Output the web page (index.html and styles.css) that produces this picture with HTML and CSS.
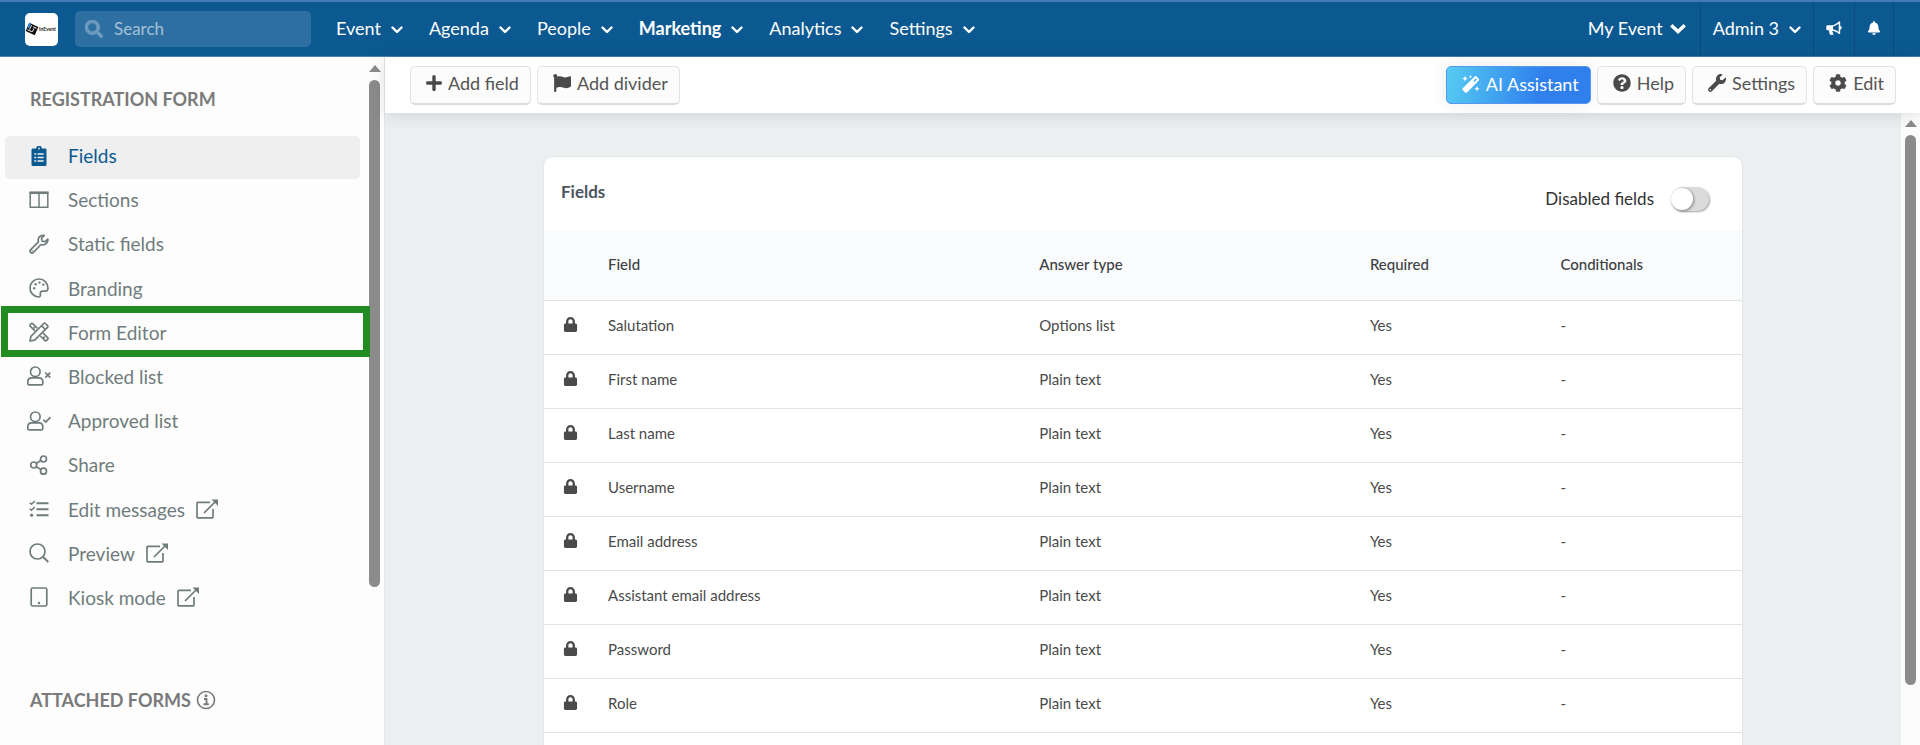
FILE: index.html
```html
<!DOCTYPE html>
<html lang="en">
<head>
<meta charset="utf-8">
<title>Registration form - Fields</title>
<link rel="stylesheet" href="styles.css">
</head>
<body>
<svg class="sprite" aria-hidden="true">
  <symbol id="i-chevron" viewBox="0 0 12 8"><path d="M1.500 1.500 6 6l4.500-4.500" fill="none" stroke="currentColor" stroke-width="2.400" stroke-linecap="round" stroke-linejoin="round"/></symbol>
  <symbol id="i-chevron-big" viewBox="0 0 16 11"><path d="M1.300 2.200 8 8.600l6.700-6.400" fill="none" stroke="currentColor" stroke-width="3.400" stroke-linecap="butt"/></symbol>
  <symbol id="i-search" viewBox="0 0 512 512"><path fill="currentColor" stroke="currentColor" stroke-width="24" d="M505 442.700L405.300 343c-4.500-4.500-10.600-7-17-7H372c27.600-35.300 44-79.700 44-128C416 93.100 322.900 0 208 0S0 93.100 0 208s93.100 208 208 208c48.300 0 92.700-16.400 128-44v16.300c0 6.400 2.500 12.500 7 17l99.700 99.700c9.400 9.400 24.600 9.400 33.900 0l28.300-28.300c9.400-9.400 9.400-24.600.1-34zM208 336c-70.700 0-128-57.200-128-128 0-70.700 57.200-128 128-128 70.700 0 128 57.200 128 128 0 70.700-57.200 128-128 128z"/></symbol>
  <symbol id="i-bell" viewBox="0 0 448 512"><path fill="currentColor" d="M224 512c35.320 0 63.970-28.650 63.970-64H160.030c0 35.350 28.650 64 63.970 64zm215.390-149.710c-19.320-20.760-55.470-51.990-55.470-154.290 0-77.700-54.480-139.900-127.940-155.160V32c0-17.670-14.320-32-31.980-32s-31.980 14.330-31.980 32v20.840C118.560 68.100 64.080 130.300 64.080 208c0 102.300-36.150 133.530-55.470 154.290-6 6.450-8.660 14.160-8.610 21.710.11 16.400 12.980 32 32.100 32h383.800c19.120 0 32-15.600 32.100-32 .05-7.550-2.610-15.270-8.610-21.710z"/></symbol>
  <symbol id="i-horn" viewBox="0 0 16 14"><path fill="currentColor" fill-rule="evenodd" d="M13 .4c.6-.2 1.200.1 1.200.8v3.900c1 .2 1.500.8 1.500 1.700s-.5 1.500-1.500 1.700v3.700c0 .7-.6 1-1.200.7-2-1.500-4-2.800-6.400-3.200-.5.700-.2 1.200.4 1.600-.5.700-.2 1.100.8 1.900-1 .9-3 .9-4 .3-.3-1.300-1-2.700-.5-4.200H1.700C.9 9.300.3 8.700.3 7.900V5.700c0-.8.600-1.400 1.400-1.400h3.800C8.400 4.200 10.900 2.200 13 .4zM12.700 2.600C11 3.900 9.200 5 7 5.400v2.900c2.200.4 4 1.400 5.700 2.700z"/></symbol>
  <symbol id="i-plus" viewBox="0 0 448 512"><path fill="currentColor" d="M416 208H272V64c0-17.670-14.330-32-32-32h-32c-17.670 0-32 14.330-32 32v144H32c-17.670 0-32 14.330-32 32v32c0 17.670 14.330 32 32 32h144v144c0 17.670 14.330 32 32 32h32c17.670 0 32-14.330 32-32V304h144c17.670 0 32-14.330 32-32v-32c0-17.670-14.330-32-32-32z"/></symbol>
  <symbol id="i-flag" viewBox="0 0 512 512"><path fill="currentColor" d="M349.565 98.783C295.978 98.783 251.721 64 184.348 64c-24.955 0-47.309 4.384-68.045 12.013a55.947 55.947 0 0 0 3.586-23.562C118.117 24.015 94.806 1.206 66.338.048 34.345-1.254 8 24.296 8 56c0 19.026 9.497 35.825 24 45.945V488c0 13.255 10.745 24 24 24h16c13.255 0 24-10.745 24-24v-94.400c28.311-12.064 63.582-22.122 114.435-22.122 53.588 0 97.844 34.783 165.217 34.783 48.169 0 86.667-16.294 122.505-40.858C506.840 359.452 512 349.571 512 339.045v-243.100c0-23.393-24.269-38.870-45.485-29.016-34.338 15.948-76.454 31.854-116.950 31.854z"/></symbol>
  <symbol id="i-help" viewBox="0 0 512 512"><path fill="currentColor" d="M504 256c0 136.997-111.043 248-248 248S8 392.997 8 256C8 119.083 119.043 8 256 8s248 111.083 248 248zM262.655 90c-54.497 0-89.255 22.957-116.549 63.758-3.536 5.286-2.353 12.415 2.715 16.258l34.699 26.310c5.205 3.947 12.621 3.008 16.665-2.122 17.864-22.658 30.113-35.797 57.303-35.797 20.429 0 45.698 13.148 45.698 32.958 0 14.976-12.363 22.667-32.534 33.976C247.128 238.528 216 254.941 216 296v4c0 6.627 5.373 12 12 12h56c6.627 0 12-5.373 12-12v-1.333c0-28.462 83.186-29.647 83.186-106.667 0-58.002-60.165-102-116.531-102zM256 338c-25.365 0-46 20.635-46 46 0 25.364 20.635 46 46 46s46-20.636 46-46c0-25.365-20.635-46-46-46z"/></symbol>
  <symbol id="i-wrench" viewBox="0 0 512 512"><path fill="currentColor" d="M507.730 109.100c-2.240-9.030-13.540-12.090-20.120-5.510l-74.360 74.360-67.880-11.310-11.310-67.880 74.360-74.360c6.620-6.620 3.430-17.900-5.660-20.160-47.380-11.740-99.550.91-136.580 37.930-39.640 39.640-50.550 97.100-34.050 147.200L18.740 402.760c-24.990 24.990-24.990 65.510 0 90.500 24.990 24.990 65.510 24.990 90.500 0l213.210-213.210c50.120 16.710 107.470 5.680 147.370-34.220 37.070-37.070 49.700-89.320 37.910-136.730zM64 472c-13.250 0-24-10.750-24-24 0-13.260 10.750-24 24-24s24 10.740 24 24c0 13.250-10.750 24-24 24z"/></symbol>
  <symbol id="i-wrench-line" viewBox="-22 -22 556 556"><path fill="none" stroke="currentColor" stroke-width="48" stroke-linejoin="round" d="M500 120l-80 74-78-18-18-78 74-80c-47-12-94 1-126 33-36 36-48 92-30 147L25 410c-20 22-20 56 0 77s55 20 77 0l212-217c52 16 108 6 147-33 33-33 48-75 39-117z"/><circle cx="66" cy="446" r="20" fill="currentColor"/></symbol>
  <symbol id="i-cog" viewBox="0 0 512 512"><path fill="currentColor" d="M487.400 315.700l-42.600-24.600c4.300-23.200 4.300-47 0-70.200l42.600-24.600c4.900-2.800 7.100-8.600 5.500-14-11.100-35.600-30-67.800-54.700-94.600-3.800-4.100-10-5.100-14.800-2.300L380.800 110c-17.900-15.400-38.500-27.300-60.800-35.100V25.800c0-5.600-3.900-10.500-9.400-11.700-36.700-8.200-74.300-7.800-109.200 0-5.500 1.200-9.400 6.100-9.400 11.700V75c-22.200 7.900-42.800 19.800-60.800 35.100L88.700 85.500c-4.900-2.800-11-1.900-14.800 2.300-24.700 26.700-43.600 58.900-54.700 94.600-1.700 5.400.6 11.200 5.500 14L67.300 221c-4.300 23.200-4.300 47 0 70.200l-42.600 24.600c-4.900 2.800-7.100 8.600-5.500 14 11.100 35.600 30 67.800 54.700 94.600 3.800 4.100 10 5.100 14.800 2.300l42.600-24.600c17.900 15.400 38.500 27.300 60.800 35.100v49.200c0 5.600 3.900 10.500 9.400 11.700 36.700 8.200 74.300 7.800 109.200 0 5.500-1.200 9.400-6.100 9.400-11.700v-49.200c22.200-7.900 42.800-19.800 60.800-35.100l42.600 24.600c4.900 2.800 11 1.900 14.800-2.300 24.700-26.700 43.600-58.900 54.700-94.600 1.500-5.500-.7-11.300-5.600-14.100zM256 336c-44.100 0-80-35.900-80-80s35.900-80 80-80 80 35.900 80 80-35.900 80-80 80z"/></symbol>
  <symbol id="i-magic" viewBox="0 0 18 18"><g fill="currentColor"><path fill-rule="evenodd" d="M.7 13.300 12.700 1.400c.5-.5 1.300-.5 1.800 0l2.300 2.300c.5.500.5 1.200 0 1.700L5 17.400c-.5.500-1.300.5-1.800 0L.7 15c-.5-.5-.5-1.200 0-1.700zM11.300 5.700l1.300 1.300 2.300-2.400-1.200-1.200z"/><path d="m3 .8.800 2 2 .8-2 .8L3 6.400l-.8-2-2-.8 2-.8zM8.500 0l.5 1.300 1.300.5L9 2.300l-.5 1.300L8 2.300l-1.300-.5L8 1.300zM15 11l.8 2 2 .8-2 .8-.8 2-.8-2-2-.8 2-.8z"/></g></symbol>
  <symbol id="i-lock" viewBox="0 0 448 512"><path fill="currentColor" d="M400 224h-24v-72C376 68.200 307.800 0 224 0S72 68.200 72 152v72H48c-26.500 0-48 21.500-48 48v192c0 26.500 21.500 48 48 48h352c26.500 0 48-21.500 48-48V272c0-26.500-21.500-48-48-48zm-104 0H152v-72c0-39.700 32.300-72 72-72s72 32.300 72 72v72z"/></symbol>
  <symbol id="i-clipboard" viewBox="0 0 20 20"><path fill="currentColor" d="M4 2.500h3.200a2.800 2.800 0 0 1 5.600 0H16c.8 0 1.500.6 1.500 1.400v14.500c0 .9-.7 1.600-1.500 1.600H4c-.8 0-1.500-.7-1.500-1.600V3.900c0-.8.700-1.400 1.500-1.400z"/><path d="M10 1.600v1.800M5.300 8h1.900M8.500 8h6.200M5.300 11.500h1.900M8.500 11.500h6.200M5.300 15h1.900M8.500 15h6.200" stroke="#efefef" stroke-width="1.300"/></symbol>
  <symbol id="i-columns" viewBox="0 0 20 20"><path fill="none" stroke="currentColor" stroke-width="1.500" d="M1.200 2.500h17.600v14.800H1.200zM10 3v14"/><path stroke="currentColor" stroke-width="2.500" d="M.5 2.800h19"/></symbol>
  <symbol id="i-palette" viewBox="0 0 20 20"><path fill="none" stroke="currentColor" stroke-width="1.700" d="M10 1C5 1 1 5 1 10c0 4.700 3.800 8.800 8.300 9 1.700.1 2.400-1 2-2.500-.5-2 .6-3.400 2.500-3.400h2.400c1.700 0 2.800-1 2.800-2.800C19 5 15 1 10 1z"/><g fill="currentColor"><circle cx="5.200" cy="10.300" r="1.200"/><circle cx="6.600" cy="6.200" r="1.200"/><circle cx="10.500" cy="4.600" r="1.200"/><circle cx="14.300" cy="6.600" r="1.200"/></g></symbol>
  <symbol id="i-pencils" viewBox="0 0 20 20"><g fill="none" stroke="currentColor" stroke-width="1.700" stroke-linejoin="round"><path d="m8.400 6.400-4.500-4.600c-.6-.6-1.300-.6-1.900 0l-.6.7c-.6.600-.6 1.200 0 1.800L6 9M11.500 14l4.300 4.400c.6.600 1.200.6 1.800 0l1-1c.6-.6.6-1.200 0-1.800L14 11"/><path d="M1 19l.9-4.700L14.700 1.500c.5-.5 1.200-.5 1.700 0l2.100 2.100c.5.500.5 1.200 0 1.700L5.700 18.100zM12.500 3.700l3.800 3.800M5.800 5.200l-1.500 1.500M15.700 14.700l-1.600 1.600"/></g></symbol>
  <symbol id="i-user-x" viewBox="0 0 24 20"><g fill="none" stroke="currentColor" stroke-width="1.700"><circle cx="8.300" cy="5.800" r="4.800"/><path d="M4.700 11.800h7.200c2.400 0 3.900 1.700 3.900 4v1.600c0 .9-.5 1.400-1.400 1.400H2.200c-.9 0-1.400-.5-1.400-1.400v-1.600c0-2.300 1.500-4 3.900-4z"/><path d="m18.300 6.600 5 5m0-5-5 5"/></g></symbol>
  <symbol id="i-user-check" viewBox="0 0 24 20"><g fill="none" stroke="currentColor" stroke-width="1.700"><circle cx="8.300" cy="5.800" r="4.800"/><path d="M4.700 11.800h7.200c2.400 0 3.900 1.700 3.900 4v1.600c0 .9-.5 1.400-1.400 1.400H2.200c-.9 0-1.400-.5-1.400-1.400v-1.600c0-2.300 1.500-4 3.900-4z"/><path d="m16.300 8.600 2.500 2.400 4.700-4.800"/></g></symbol>
  <symbol id="i-share" viewBox="0 0 20 20"><g fill="none" stroke="currentColor" stroke-width="1.700"><circle cx="4.700" cy="10" r="3"/><circle cx="14.500" cy="4" r="3"/><circle cx="14.500" cy="16.200" r="3"/><path d="m7.200 8.400 4.700-2.800M7.200 11.600l4.700 2.900"/></g></symbol>
  <symbol id="i-tasks" viewBox="0 0 20 20"><path fill="none" stroke="currentColor" stroke-width="2" d="M7.500 4.200h12M7.500 10.200h12M7.500 16.200h12"/><path fill="none" stroke="currentColor" stroke-width="1.500" d="m.7 3.700 1.800 1.600L5.800 2M.7 9.700l1.800 1.600L5.800 8"/><circle cx="2.600" cy="16.200" r="1.600" fill="currentColor"/></symbol>
  <symbol id="i-zoom" viewBox="0 0 20 20"><path fill="none" stroke="currentColor" stroke-width="1.900" d="M14.200 14 19.300 19"/><circle cx="8.500" cy="8.500" r="7.500" fill="none" stroke="currentColor" stroke-width="1.700"/></symbol>
  <symbol id="i-tablet" viewBox="0 0 20 20"><rect x="2.200" y="1" width="15.600" height="18" rx="1.500" fill="none" stroke="currentColor" stroke-width="1.700"/><circle cx="10" cy="16" r="1.200" fill="currentColor"/></symbol>
  <symbol id="i-external" viewBox="0 0 22 20"><path fill="none" stroke="currentColor" stroke-width="1.700" stroke-linejoin="round" d="M14 3.300H1.800c-.5 0-.8.300-.8.800v14c0 .5.300.8.800.8h14.400c.5 0 .8-.3.800-.8v-8M8 14 19.500 2.500"/><path fill="currentColor" d="M15.500.5H22v6.400z"/></symbol>
  <symbol id="i-info" viewBox="0 0 20 20"><circle cx="10" cy="10" r="8.500" fill="none" stroke="currentColor" stroke-width="1.600"/><circle cx="10" cy="5.800" r="1.500" fill="currentColor"/><path fill="none" stroke="currentColor" stroke-width="1.900" d="M8 9h2.500v5.500M7.500 14.300h5.300"/></symbol>
  <symbol id="i-up" viewBox="0 0 12 7"><path fill="currentColor" d="M6 0l6 7H0z"/></symbol>
</svg>

<header class="topbar">
  <a class="logo" href="#" aria-label="InEvent">
    <svg viewBox="0 0 33 33"><g transform="rotate(24 7 16)"><path fill="#111" d="M2 11.500h10v9H2z"/><path fill="#2f86d6" d="M2 11.500h2v5H2z"/><path stroke="#fff" stroke-width=".8" d="M5 12.500v5M8.500 14.500v4M3 18.500h5M7 13.500h4"/></g><text class="logo-text" x="14" y="18">InEvent</text></svg>
  </a>
  <label class="search">
    <svg class="search-icon"><use href="#i-search"/></svg>
    <input type="text" placeholder="Search" aria-label="Search">
  </label>
  <nav class="menu">
    <button type="button">Event<svg class="chev"><use href="#i-chevron"/></svg></button>
    <button type="button">Agenda<svg class="chev"><use href="#i-chevron"/></svg></button>
    <button type="button">People<svg class="chev"><use href="#i-chevron"/></svg></button>
    <button type="button" class="current">Marketing<svg class="chev"><use href="#i-chevron"/></svg></button>
    <button type="button">Analytics<svg class="chev"><use href="#i-chevron"/></svg></button>
    <button type="button">Settings<svg class="chev"><use href="#i-chevron"/></svg></button>
  </nav>
  <div class="account">
    <button type="button" class="event-switch">My Event<svg class="chev-big"><use href="#i-chevron-big"/></svg></button>
    <button type="button">Admin 3<svg class="chev"><use href="#i-chevron"/></svg></button>
    <button type="button" aria-label="Announcements"><svg class="horn"><use href="#i-horn"/></svg></button>
    <button type="button" aria-label="Notifications"><svg class="bell"><use href="#i-bell"/></svg></button>
  </div>
</header>

<div class="shell">
  <aside class="sidebar">
    <div class="side-content">
      <h2>REGISTRATION FORM</h2>
      <ul class="side-menu">
        <li><a class="active" href="#"><svg class="ico"><use href="#i-clipboard"/></svg>Fields</a></li>
        <li><a href="#"><svg class="ico"><use href="#i-columns"/></svg>Sections</a></li>
        <li><a href="#"><svg class="ico"><use href="#i-wrench-line"/></svg>Static fields</a></li>
        <li><a href="#"><svg class="ico"><use href="#i-palette"/></svg>Branding</a></li>
        <li class="marked"><a href="#"><svg class="ico"><use href="#i-pencils"/></svg>Form Editor</a></li>
        <li><a href="#"><svg class="ico"><use href="#i-user-x"/></svg>Blocked list</a></li>
        <li><a href="#"><svg class="ico"><use href="#i-user-check"/></svg>Approved list</a></li>
        <li><a href="#"><svg class="ico"><use href="#i-share"/></svg>Share</a></li>
        <li><a href="#"><svg class="ico"><use href="#i-tasks"/></svg>Edit messages<svg class="ext"><use href="#i-external"/></svg></a></li>
        <li><a href="#"><svg class="ico"><use href="#i-zoom"/></svg>Preview<svg class="ext"><use href="#i-external"/></svg></a></li>
        <li><a href="#"><svg class="ico"><use href="#i-tablet"/></svg>Kiosk mode<svg class="ext"><use href="#i-external"/></svg></a></li>
      </ul>
      <h2 class="attached">ATTACHED FORMS<svg class="info"><use href="#i-info"/></svg></h2>
    </div>
    <div class="scroll side-scroll" aria-hidden="true"><svg><use href="#i-up"/></svg><span class="thumb"></span></div>
  </aside>

  <div class="work">
    <div class="toolbar">
      <button type="button" class="btn"><svg class="plus"><use href="#i-plus"/></svg>Add field</button>
      <button type="button" class="btn"><svg><use href="#i-flag"/></svg>Add divider</button>
      <span class="spacer"></span>
      <button type="button" class="btn ai"><svg><use href="#i-magic"/></svg>AI Assistant</button>
      <button type="button" class="btn"><svg><use href="#i-help"/></svg>Help</button>
      <button type="button" class="btn"><svg><use href="#i-wrench"/></svg>Settings</button>
      <button type="button" class="btn"><svg><use href="#i-cog"/></svg>Edit</button>
    </div>
    <div class="viewport">
      <main class="canvas">
        <section class="card">
          <div class="card-head">
            <h1>Fields</h1>
            <label class="toggle">Disabled fields<input type="checkbox" role="switch"></label>
          </div>
          <table>
            <colgroup><col class="c-lock"><col class="c-field"><col class="c-type"><col class="c-req"><col></colgroup>
            <thead><tr><th></th><th>Field</th><th>Answer type</th><th>Required</th><th>Conditionals</th></tr></thead>
            <tbody>
              <tr><td><svg class="lock"><use href="#i-lock"/></svg></td><td>Salutation</td><td>Options list</td><td>Yes</td><td>-</td></tr>
              <tr><td><svg class="lock"><use href="#i-lock"/></svg></td><td>First name</td><td>Plain text</td><td>Yes</td><td>-</td></tr>
              <tr><td><svg class="lock"><use href="#i-lock"/></svg></td><td>Last name</td><td>Plain text</td><td>Yes</td><td>-</td></tr>
              <tr><td><svg class="lock"><use href="#i-lock"/></svg></td><td>Username</td><td>Plain text</td><td>Yes</td><td>-</td></tr>
              <tr><td><svg class="lock"><use href="#i-lock"/></svg></td><td>Email address</td><td>Plain text</td><td>Yes</td><td>-</td></tr>
              <tr><td><svg class="lock"><use href="#i-lock"/></svg></td><td>Assistant email address</td><td>Plain text</td><td>Yes</td><td>-</td></tr>
              <tr><td><svg class="lock"><use href="#i-lock"/></svg></td><td>Password</td><td>Plain text</td><td>Yes</td><td>-</td></tr>
              <tr><td><svg class="lock"><use href="#i-lock"/></svg></td><td>Role</td><td>Plain text</td><td>Yes</td><td>-</td></tr>
              <tr><td></td><td></td><td></td><td></td><td></td></tr>
            </tbody>
          </table>
        </section>
      </main>
      <div class="scroll main-scroll" aria-hidden="true"><svg><use href="#i-up"/></svg><span class="thumb"></span></div>
    </div>
  </div>
</div>
</body>
</html>
```
FILE: styles.css
```css
* { box-sizing: border-box; }

body {
  margin: 0;
  height: 100vh;
  overflow: hidden;
  display: flex;
  flex-direction: column;
  font-family: Lato, "Liberation Sans", sans-serif;
  color: #4a4a4a;
  background: #ebeff0;
}

button { font: inherit; color: inherit; cursor: pointer; }
svg { flex: none; display: block; }
.sprite { position: absolute; width: 0; height: 0; }

/* Top bar */
.topbar {
  flex: none;
  display: flex;
  align-items: stretch;
  height: 57px;
  padding: 0 26px 0 25px;
  color: #fff;
  background: #0c5991;
  border-top: 2px solid #447ab5;
  border-bottom: 1px solid #4683b0;
}

.logo {
  align-self: center;
  width: 33px;
  height: 33px;
  margin-right: 17px;
  border-radius: 5px;
  background: #fff;
}

.logo-text { font-size: 5px; font-weight: 700; fill: #222; }

.search {
  align-self: center;
  display: flex;
  align-items: center;
  gap: 11px;
  width: 236px;
  height: 36px;
  padding: 0 10px;
  border-radius: 5px;
  background: #2e6fa1;
}

.search-icon { width: 18px; height: 18px; color: #6d9bbf; overflow: visible; }

.search input {
  flex: 1;
  min-width: 0;
  padding: 0 0 2px;
  border: 0;
  outline: 0;
  font: inherit;
  font-size: 17px;
  color: #fff;
  background: none;
}

.search input::placeholder { color: #a3c1d8; opacity: 1; }

.menu, .account { display: flex; font-size: 18px; }
.menu { gap: 26px; margin-left: 25px; }
.account { margin-left: auto; }

.menu button, .account button {
  display: flex;
  align-items: center;
  gap: 10px;
  padding: 0 0 2px;
  border: 0;
  background: none;
}

.menu .current { font-weight: 700; }
.chev { width: 12px; height: 8px; margin-top: 3px; }
.chev-big { width: 16px; height: 11px; }

.account button { padding: 0 12px 2px; border-right: 1px solid #0b4c7c; }
.account .event-switch { gap: 7px; padding-right: 14px; }
.horn { width: 16px; height: 14px; }
.bell { width: 14px; height: 14px; }

/* Columns under the top bar */
.shell { flex: 1; min-height: 0; display: flex; }

.sidebar {
  flex: none;
  display: flex;
  width: 385px;
  background: #fdfdfd;
  border-right: 1px solid #e3e7e9;
}

.side-content { flex: 1; padding: 31px 9px 0 5px; }

h2 {
  display: flex;
  align-items: center;
  gap: 5px;
  margin: 0 25px 26px;
  font-size: 18px;
  line-height: 22px;
  font-weight: 700;
  color: #7a7a7a;
}

.attached { margin-top: 68px; }
.info { width: 20px; height: 20px; }

.side-menu {
  display: grid;
  align-content: space-between;
  height: 485px;
  margin: 0;
  padding: 0;
  list-style: none;
}

.side-menu a {
  display: flex;
  align-items: center;
  height: 43px;
  padding: 0 22px 4px;
  border-radius: 5px;
  font-size: 19px;
  color: #707c7c;
  text-decoration: none;
}

.side-menu .active { color: #0c5991; background: #efefef; }
.ico { width: 24px; height: 20px; margin-right: 17px; }
.ext { width: 22px; height: 20px; margin-left: 11px; }

.marked { position: relative; }

.marked::after {
  content: "";
  position: absolute;
  inset: -7px -10px -1px -4px;
  border: 7px solid #228b22;
}

/* Scroll bars */
.scroll { flex: none; display: flex; flex-direction: column; align-items: center; color: #8b8b8b; }
.scroll svg { width: 12px; height: 7px; }
.thumb { width: 11px; margin-top: 8px; border-radius: 6px; background: #8b8b8b; }

.side-scroll { width: 15px; padding: 8px 4px 0 0; }
.side-scroll .thumb { height: 74.5%; }

.main-scroll { width: 19px; padding-top: 7px; background: #fcfcfc; }
.main-scroll .thumb { height: 88%; }

/* Work area */
.work { flex: 1; min-width: 0; display: flex; flex-direction: column; }

.toolbar {
  position: relative;
  flex: none;
  display: flex;
  gap: 6px;
  padding: 9px 24px 8px 25px;
  background: #fff;
  box-shadow: 0 2px 16px rgba(0, 0, 0, 0.12);
}

.spacer { flex: 1; }

.btn {
  display: flex;
  align-items: center;
  gap: 6px;
  height: 39px;
  padding: 0 11px 4px 15px;
  border: 1px solid #e2e2e2;
  border-bottom: 2px solid #dcdcdc;
  border-radius: 5px;
  font-size: 18px;
  color: #555;
  background: #fcfcfc;
}

.btn svg { width: 18px; height: 18px; color: #4a4a4a; }
.btn .plus { width: 16px; }

.ai {
  height: 38px;
  padding-bottom: 3px;
  border: 1px solid #5795ee;
  color: #fff;
  background: linear-gradient(100deg, #56ccf2, #2f80ed 65%);
  box-shadow: 0 0 20px rgba(0, 0, 0, 0.08);
}

.btn.ai svg { color: #fff; }

.viewport { flex: 1; min-height: 0; display: flex; }
.canvas { flex: 1; overflow: hidden; padding-top: 43px; }

.card {
  width: 100%;
  max-width: 1200px;
  margin: 0 auto;
  border: 1px solid #e2e6e8;
  border-radius: 10px;
  background: #fff;
  overflow: hidden;
}

.card-head {
  display: flex;
  justify-content: space-between;
  padding: 24px 33px 0 17px;
  height: 73px;
}

h1 { margin: 0; font-size: 17px; line-height: 22px; font-weight: 700; color: #4b5660; }

.toggle {
  display: flex;
  align-items: center;
  gap: 17px;
  height: 36px;
  font-size: 17px;
  line-height: 20px;
  color: #333;
}

.toggle input {
  appearance: none;
  width: 38px;
  height: 24px;
  margin: 0;
  border-radius: 12px;
  background: #dbdbdb;
  box-shadow: 1px 1px 2px rgba(0, 0, 0, 0.35);
}

.toggle input::before {
  content: "";
  display: block;
  width: 22px;
  height: 22px;
  margin-top: 1px;
  border-radius: 11px;
  background: #fff;
  box-shadow: 1px 1px 3px rgba(0, 0, 0, 0.4);
}

table { width: 100%; table-layout: fixed; border-collapse: collapse; font-size: 15px; }
.c-lock { width: 50px; }
.c-field { width: 36%; }
.c-type { width: 27.6%; }
.c-req { width: 15.9%; }

th, td {
  height: 54px;
  padding: 0 14px 5px;
  text-align: left;
  border-bottom: 1px solid #e0e2e4;
}

th { height: 70px; padding-bottom: 2px; font-weight: 500; color: #3c4043; background: #fafbfd; }
td:first-child { padding-left: 19px; }
.lock { width: 15px; height: 15px; color: #4a4a4a; }
```
